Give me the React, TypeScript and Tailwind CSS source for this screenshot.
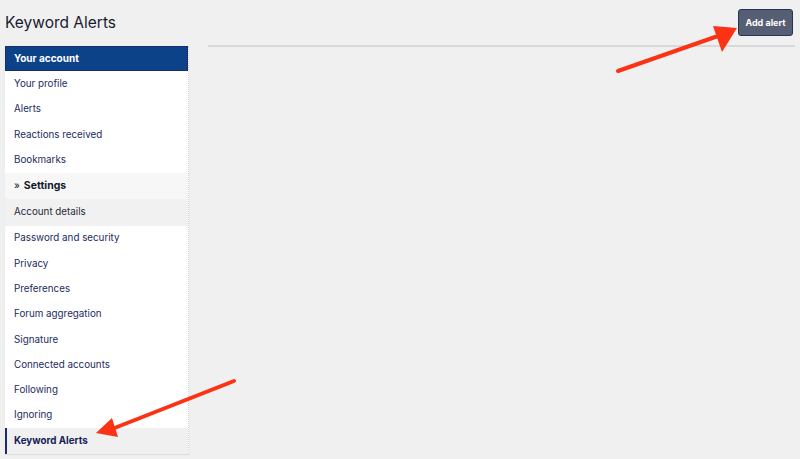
const items = [
  "Your profile",
  "Alerts",
  "Reactions received",
  "Bookmarks",
];

const settingsItems = [
  "Password and security",
  "Privacy",
  "Preferences",
  "Forum aggregation",
  "Signature",
  "Connected accounts",
  "Following",
  "Ignoring",
];

const Arrows = () => (
  <svg className="pointer-events-none absolute inset-0" width="800" height="459">
    <line x1="618" y1="71" x2="718" y2="36" stroke="#fc3214" strokeWidth="4" strokeLinecap="round" />
    <polygon points="737,28 713,26 722,52" fill="#fc3214" />
    <line x1="234" y1="381" x2="112" y2="429" stroke="#fc3214" strokeWidth="4" strokeLinecap="round" />
    <polygon points="96,433 112,418 118,437" fill="#fc3214" />
  </svg>
);

export default function App() {
  return (
    <div className="relative h-[459px] w-[800px] overflow-hidden bg-[#f0f0f0] font-['Inter',sans-serif] text-[#1c2b5e]">
      <div className="flex items-start justify-between pl-[5px] pr-[7px] pt-[9px]">
        <h1 className="pt-[3px] text-[15.5px] leading-[22px] text-[#1a1a2e]">Keyword Alerts</h1>
        <button className="h-[27px] w-[55px] rounded-[3px] border border-[#263458] bg-[#565e74] text-[9px] font-bold text-white">
          Add alert
        </button>
      </div>
      <div className="mt-[9px] flex gap-[19px] pl-[5px] pr-[5px]">
        <nav className="mt-[1px] w-[184px] border-r border-dotted border-[#d4d4d4] bg-white shadow-[0_1px_1px_rgba(0,0,0,0.08)]">
          <div className="flex h-[25px] items-center border border-[#1d2a6b] bg-[#0c4388] px-[8px] text-[10px] font-bold text-white">
            Your account
          </div>
          {items.map((label) => (
            <div key={label} className="flex h-[25.4px] items-center px-[9px] text-[9.8px] pt-[1px]">
              {label}
            </div>
          ))}
          <div className="flex h-[26px] items-center gap-[4px] bg-[#f7f7f7] px-[9px] text-[10.5px] font-bold text-[#111827]">
            <span className="text-[10px] font-normal">»</span>
            Settings
          </div>
          <div className="flex h-[27px] items-center bg-[#f1f1f1] px-[9px] pt-[1px] text-[9.8px] text-[#1f2937]">
            Account details
          </div>
          {settingsItems.map((label) => (
            <div key={label} className="flex h-[25.3px] items-center px-[9px] pt-[1px] text-[9.8px]">
              {label}
            </div>
          ))}
          <div className="flex h-[26px] items-center border-l-2 border-[#1d2a6b] bg-[#f0f0f0] px-[7px] pt-[1px] text-[9.8px] font-bold text-[#14225a]">
            Keyword Alerts
          </div>
        </nav>
        <div className="h-[2px] flex-1 bg-[#d9d9d9]" />
      </div>
      <Arrows />
    </div>
  );
}
